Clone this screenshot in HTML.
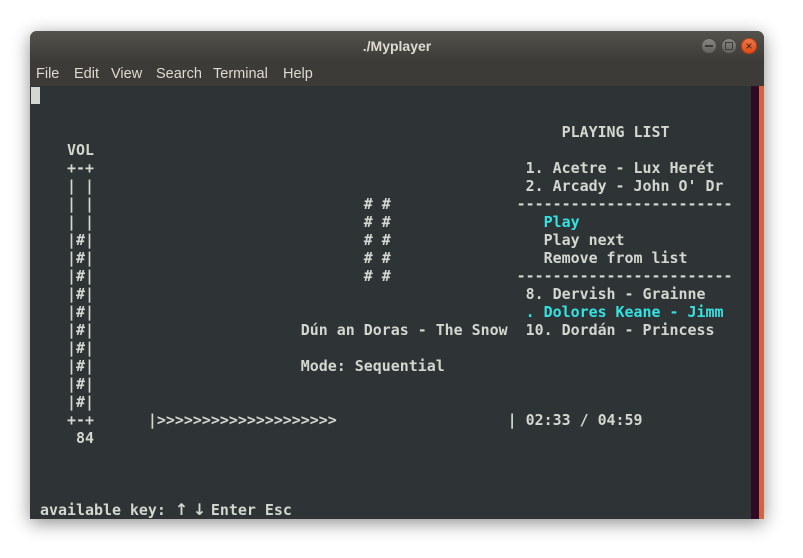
<!DOCTYPE html>
<html><head><meta charset="utf-8"><style>
body{margin:0;width:803px;height:558px;background:#fff;position:relative;overflow:hidden;font-family:"Liberation Sans",sans-serif}
.win{position:absolute;left:30px;top:31px;width:734px;height:488px;border-radius:7px 7px 0 0;box-shadow:0 4px 18px rgba(0,0,0,.45);overflow:hidden;background:#2e3436}
.title{position:absolute;left:0;top:0;width:734px;height:29px;background:linear-gradient(#54524c,#3d3c38);color:#dfdbd2;font-size:14px;font-weight:bold;text-align:center;line-height:30px}
.menu{position:absolute;left:0;top:29px;width:734px;height:26px;background:#3c3b37;color:#dfdbd2;font-size:14.5px;line-height:28px}
.menu span{position:absolute}
.btn{position:absolute;top:7px;width:16px;height:16px;border-radius:50%;background:linear-gradient(#8a8984,#605f5b);box-shadow:inset 0 0 0 1px #45443f}
.term{position:absolute;left:1px;top:55px;width:720px;height:433px;background:#2e3436}
.sb1{position:absolute;left:721px;top:55px;width:8px;height:433px;background:#300a24}
.sb2{position:absolute;left:729px;top:55px;width:5px;height:433px;background:#d1653f}
pre{position:absolute;left:31px;top:87px;margin:0;font-family:"DejaVu Sans Mono","Liberation Mono",monospace;font-weight:bold;font-size:14.95px;line-height:18px;color:#d3d7cf}
.c{color:#34e2e2}
.a{display:inline-block;width:9px;text-align:center;font-family:"DejaVu Sans",sans-serif;font-size:16px;line-height:0}
.cur{position:absolute;left:31px;top:87px;width:9px;height:17px;background:#d3d7cf}
</style></head><body>
<div class="win">
<div class="title">./Myplayer</div>
<div class="btn" style="left:671px"><div style="position:absolute;left:4px;top:7px;width:8px;height:2px;background:#3c3b37"></div></div>
<div class="btn" style="left:691px"><div style="position:absolute;left:4px;top:4px;width:6px;height:6px;border:1px solid #3c3b37"></div></div>
<div class="btn" style="left:711px;background:linear-gradient(#f27a4d,#dd4814);box-shadow:inset 0 0 0 1px #b93c10;color:#3c1a0a;font-size:12px;line-height:16px;text-align:center">×</div>
<div class="menu"><span style="left:6px">File</span><span style="left:44px">Edit</span><span style="left:81px">View</span><span style="left:126px">Search</span><span style="left:183px">Terminal</span><span style="left:253px">Help</span></div>
<div class="term"></div><div class="sb1"></div><div class="sb2"></div>
</div>
<div class="cur"></div>
<pre>


                                                           PLAYING LIST
    VOL
    +-+                                                1. Acetre - Lux Herét
    | |                                                2. Arcady - John O' Dr
    | |                              # #              ------------------------
    | |                              # #                 <span class="c">Play</span>
    |#|                              # #                 Play next
    |#|                              # #                 Remove from list
    |#|                              # #              ------------------------
    |#|                                                8. Dervish - Grainne
    |#|                                                <span class="c">. Dolores Keane - Jimm</span>
    |#|                       Dún an Doras - The Snow  10. Dordán - Princess
    |#|
    |#|                       Mode: Sequential
    |#|
    |#|
    +-+      |&gt;&gt;&gt;&gt;&gt;&gt;&gt;&gt;&gt;&gt;&gt;&gt;&gt;&gt;&gt;&gt;&gt;&gt;&gt;&gt;                   | 02:33 / 04:59
     84



 available key: <span class="a">↑</span> <span class="a">↓</span> Enter Esc</pre>
</body></html>
